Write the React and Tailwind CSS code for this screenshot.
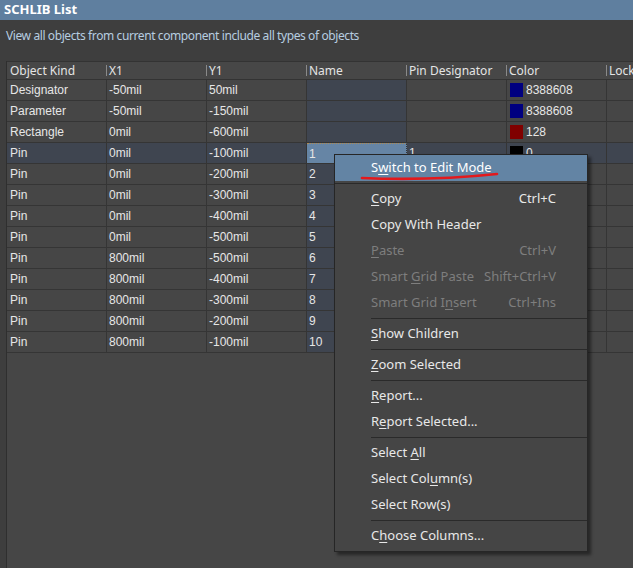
import React from 'react';

const rows = [
  { kind: 'Designator', x1: '-50mil', y1: '50mil', name: '', pin: '', color: '#000080', colorText: '8388608' },
  { kind: 'Parameter', x1: '-50mil', y1: '-150mil', name: '', pin: '', color: '#000080', colorText: '8388608' },
  { kind: 'Rectangle', x1: '0mil', y1: '-600mil', name: '', pin: '', color: '#800000', colorText: '128' },
  { kind: 'Pin', x1: '0mil', y1: '-100mil', name: '1', pin: '1', color: '#000000', colorText: '0', selected: true },
  { kind: 'Pin', x1: '0mil', y1: '-200mil', name: '2', pin: '2' },
  { kind: 'Pin', x1: '0mil', y1: '-300mil', name: '3', pin: '3' },
  { kind: 'Pin', x1: '0mil', y1: '-400mil', name: '4', pin: '4' },
  { kind: 'Pin', x1: '0mil', y1: '-500mil', name: '5', pin: '5' },
  { kind: 'Pin', x1: '800mil', y1: '-500mil', name: '6', pin: '6' },
  { kind: 'Pin', x1: '800mil', y1: '-400mil', name: '7', pin: '7' },
  { kind: 'Pin', x1: '800mil', y1: '-300mil', name: '8', pin: '8' },
  { kind: 'Pin', x1: '800mil', y1: '-200mil', name: '9', pin: '9' },
  { kind: 'Pin', x1: '800mil', y1: '-100mil', name: '10', pin: '10' },
];

const columns = ['Object Kind', 'X1', 'Y1', 'Name', 'Pin Designator', 'Color', 'Locked'];

// label split into [before, mnemonic, after]
const menu = [
  { label: ['S', 'w', 'itch to Edit Mode'], active: true },
  { sep: true, full: true },
  { label: ['', 'C', 'opy'], key: 'Ctrl+C' },
  { label: ['Copy With Header', '', ''] },
  { label: ['', 'P', 'aste'], key: 'Ctrl+V', disabled: true },
  { label: ['Smart ', 'G', 'rid Paste'], key: 'Shift+Ctrl+V', disabled: true },
  { label: ['Smart Grid I', 'n', 'sert'], key: 'Ctrl+Ins', disabled: true },
  { sep: true },
  { label: ['', 'S', 'how Children'] },
  { sep: true },
  { label: ['', 'Z', 'oom Selected'] },
  { sep: true },
  { label: ['', 'R', 'eport...'] },
  { label: ['R', 'e', 'port Selected...'] },
  { sep: true },
  { label: ['Select ', 'A', 'll'] },
  { label: ['Select Col', 'u', 'mn(s)'] },
  { label: ['Select Row(s)', '', ''] },
  { sep: true },
  { label: ['C', 'h', 'oose Columns...'] },
];

const Cell = ({ children, className = '' }) => (
  <div className={`w-[100px] shrink-0 h-full border-r border-[#353535] px-[2px] flex items-center ${className}`}>
    {children}
  </div>
);

const App = () => {
  return (
    <div className="relative w-[633px] h-[568px] overflow-hidden bg-[#3e3e3e]" style={{ fontFamily: '"Noto Sans", "Liberation Sans", sans-serif' }}>
      {/* Title bar */}
      <div className="h-[20px] bg-[#5f7f9f] px-[4px] flex items-center text-white text-[13px] font-bold">
        SCHLIB List
      </div>

      {/* Description */}
      <div className="h-[41px] px-[6px] pt-[7px] text-[12px] text-[#b7cde0] tracking-[-0.4px]">
        View all objects from current component include all types of objects
      </div>

      {/* Grid */}
      <div className="ml-[6px] h-[507px] border-l border-[#2f2f2f] bg-[#464646] overflow-hidden">
        {/* Header */}
        <div className="flex h-[19px] w-[700px] border-y border-[#333333] bg-[#474747] text-[12px] text-[#e4e4e4]">
          {columns.map((c, i) => (
            <div key={c} className="w-[100px] shrink-0 h-full flex items-center border-r border-[#474747]">
              {i > 0 && <span className="w-px h-[11px] bg-[#8a8a8a] -ml-px mr-[2px]" />}
              <span className={i === 0 ? 'pl-[3px]' : ''}>{c}</span>
            </div>
          ))}
        </div>

        {/* Rows */}
        {rows.map((r, idx) => (
          <div
            key={idx}
            className={`flex h-[21px] w-[700px] border-b border-[#353535] text-[12px] text-[#e6e6e6] ${r.selected ? 'bg-[#3f4550]' : ''}`}
            style={{ fontFamily: '"Liberation Sans", Arial, sans-serif' }}
          >
            <Cell className="pl-[3px]">{r.kind}</Cell>
            <Cell>{r.x1}</Cell>
            <Cell>{r.y1}</Cell>
            <Cell className={r.selected ? 'bg-[#6685a5] border-t border-dotted border-t-[#b08a50]' : 'bg-[#3f4550]'}>{r.name}</Cell>
            <Cell>{r.pin}</Cell>
            <Cell className="gap-[3px] pl-[3px]">
              {r.color && <span className="w-[13px] h-[14px]" style={{ backgroundColor: r.color }} />}
              {r.colorText}
            </Cell>
            <Cell />
          </div>
        ))}
      </div>

      {/* Context menu */}
      <div
        className="absolute left-[334px] top-[154px] w-[254px] border border-[#262626] bg-[#454545] pb-[2px] text-[13px] shadow-[3px_3px_3px_rgba(0,0,0,0.45)]"
      >
        {menu.map((m, i) =>
          m.sep ? (
            <div key={i} className={`h-[5px] flex items-center ${m.full ? '' : 'pl-[36px]'}`}>
              <div className="h-px w-full bg-[#2a2a2a]" />
            </div>
          ) : (
            <div
              key={i}
              className={`h-[26px] flex items-center justify-between pl-[36px] pr-[31px] ${m.active ? 'bg-[#6384a4] text-white' : m.disabled ? 'text-[#7e7e7e]' : 'text-[#e8e8e8]'}`}
            >
              <span>
                {m.label[0]}
                {m.label[1] && <span className="underline underline-offset-2">{m.label[1]}</span>}
                {m.label[2]}
              </span>
              {m.key && <span>{m.key}</span>}
            </div>
          )
        )}
      </div>

      {/* Red hand-drawn underline */}
      <svg className="absolute left-0 top-0 pointer-events-none" width="633" height="568">
        <path d="M362 178 Q 430 181 497 174" stroke="#e3191c" strokeWidth="2.6" fill="none" strokeLinecap="round" />
      </svg>
    </div>
  );
};

export default App;
